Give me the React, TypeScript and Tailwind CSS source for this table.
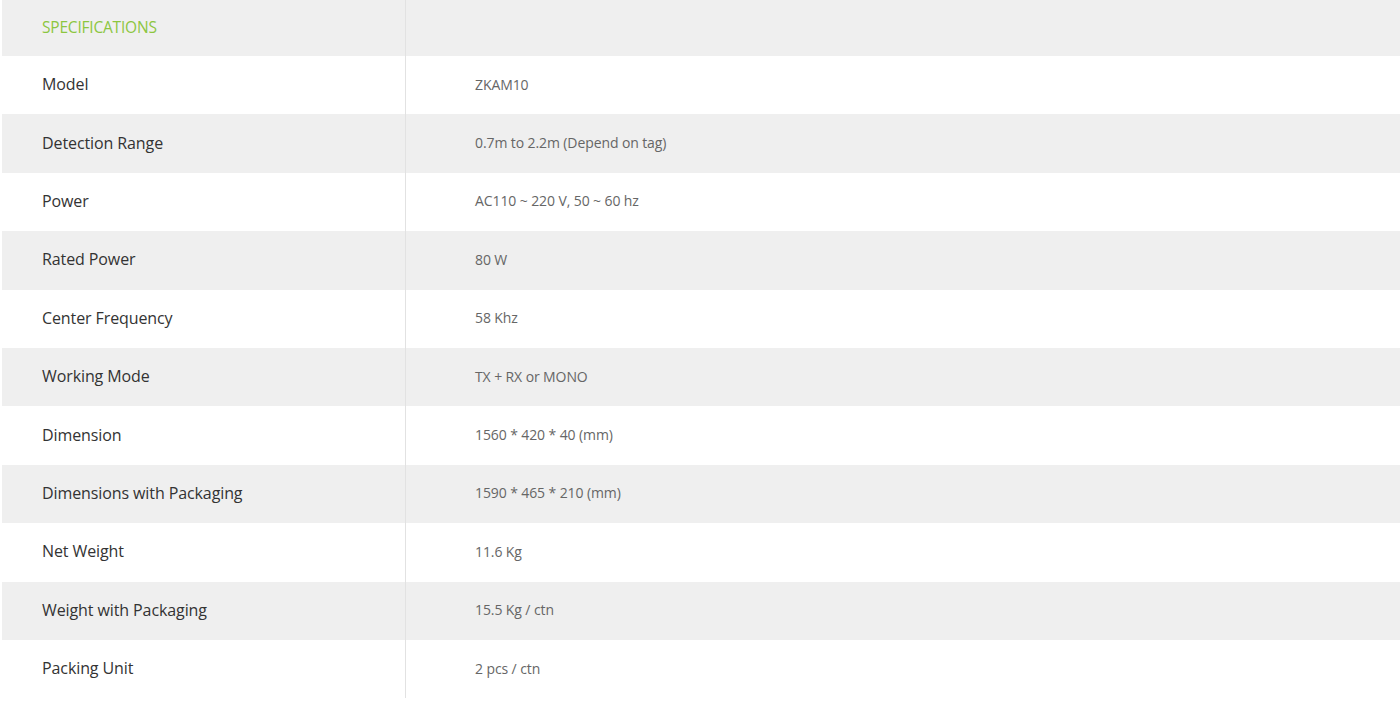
const rows: [string, string][] = [
  ["Model", "ZKAM10"],
  ["Detection Range", "0.7m to 2.2m (Depend on tag)"],
  ["Power", "AC110 ~ 220 V, 50 ~ 60 hz"],
  ["Rated Power", "80 W"],
  ["Center Frequency", "58 Khz"],
  ["Working Mode", "TX + RX or MONO"],
  ["Dimension", "1560 * 420 * 40 (mm)"],
  ["Dimensions with Packaging", "1590 * 465 * 210 (mm)"],
  ["Net Weight", "11.6 Kg"],
  ["Weight with Packaging", "15.5 Kg / ctn"],
  ["Packing Unit", "2 pcs / ctn"],
];

export default function App() {
  return (
    <div className="w-[1400px] h-[720px] bg-white pl-[2px]" style={{ fontFamily: '"Open Sans", sans-serif' }}>
      <div className="grid grid-cols-[404px_1fr]">
        <div className="h-[56px] bg-[#efefef] border-r border-[#e2e2e2] flex items-center pl-[40px] pb-[1px]">
          <span className="text-[15.5px] tracking-[-0.2px] text-[#8cc63f]">SPECIFICATIONS</span>
        </div>
        <div className="h-[56px] bg-[#efefef]" />
        {rows.map(([label, value], i) => {
          const bg = i % 2 === 0 ? "bg-white" : "bg-[#efefef]";
          return [
            <div key={label + "l"} className={`h-[58.4px] ${bg} border-r border-[#e2e2e2] flex items-center pl-[40px] pb-[2px]`}>
              <span className="text-[16px] tracking-[-0.1px] text-[#333]">{label}</span>
            </div>,
            <div key={label + "v"} className={`h-[58.4px] ${bg} flex items-center pl-[69px] pb-[2px]`}>
              <span className="text-[14px] tracking-[-0.1px] text-[#666]">{value}</span>
            </div>,
          ];
        })}
      </div>
    </div>
  );
}
